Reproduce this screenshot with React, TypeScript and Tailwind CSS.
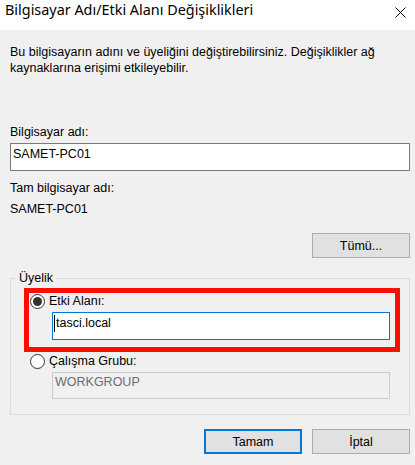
function Radio({ checked }: { checked?: boolean }) {
  return (
    <div className="w-[15px] h-[15px] rounded-full border border-[#333333] bg-white flex items-center justify-center shrink-0">
      {checked && <div className="w-[9px] h-[9px] rounded-full bg-[#333333]" />}
    </div>
  );
}

function Button({ label, focused }: { label: string; focused?: boolean }) {
  return (
    <div
      className={
        focused
          ? "w-[98px] h-[25px] bg-[#e1e1e1] border-2 border-[#0078d7] flex items-center justify-center text-[#000000]"
          : "w-[98px] h-[25px] bg-[#e1e1e1] border border-[#adadad] flex items-center justify-center text-[#000000]"
      }
    >
      {label}
    </div>
  );
}

export default function App() {
  return (
    <div className="w-[415px] h-[465px] bg-[#f0f0f0] overflow-hidden text-[12.5px] leading-[16px] text-black font-['Liberation_Sans',Arial,sans-serif]">
      {/* Title bar */}
      <div className="h-[30px] bg-white flex justify-between">
        <div className="pl-[5px] text-[14.4px] leading-[20px] text-[#000000] font-['Noto_Sans',sans-serif]">
          Bilgisayar Adı/Etki Alanı Değişiklikleri
        </div>
        <svg className="mt-[7px] mr-[9px]" width="11" height="11" viewBox="0 0 11 11">
          <path d="M0.5 0.5 L10.5 10.5 M10.5 0.5 L0.5 10.5" stroke="#000" strokeWidth="1" fill="none" />
        </svg>
      </div>

      {/* Body */}
      <div className="pl-[10px] pr-[5px] pt-[14px] flex flex-col">
        <p>
          Bu bilgisayarın adını ve üyeliğini değiştirebilirsiniz. Değişiklikler ağ kaynaklarına erişimi etkileyebilir.
        </p>

        <div className="mt-[48px]">Bilgisayar adı:</div>
        <div className="mt-[3px] h-[28px] bg-white border border-[#7a7a7a] pl-[2px] pt-[2px]">SAMET-PC01</div>

        <div className="mt-[9px]">Tam bilgisayar adı:</div>
        <div className="mt-[5px]">SAMET-PC01</div>

        <div className="mt-[16px] self-end">
          <Button label="Tümü..." />
        </div>

        {/* Membership group */}
        <fieldset className="mt-[12px] border border-[#dcdcdc] p-0 pb-[15px]">
          <legend className="ml-[5px] px-[3px] leading-[16px]">Üyelik</legend>

          <div className="mt-[2px] ml-[13px] w-[376px] border-[5px] border-[#ff0d00] pb-[7px]">
            <div className="flex items-center gap-[4px] pl-[1px] h-[16px]">
              <Radio checked />
              <span>Etki Alanı:</span>
            </div>
            <div className="mt-[3px] ml-[23px] w-[338px] h-[28px] bg-white border border-[#0078d7] pl-[1px] pt-[2px] flex items-start">
              <span className="w-[1px] h-[17px] bg-black mr-[1px]" />
              <span>tasci.local</span>
            </div>
          </div>

          <div className="mt-[1px] ml-[19px] flex items-center gap-[4px] h-[16px]">
            <Radio />
            <span>Çalışma Grubu:</span>
          </div>
          <div className="mt-[3px] ml-[41px] w-[338px] h-[27px] border border-[#cccccc] pl-[2px] pt-[1px] text-[#6d6d6d]">
            WORKGROUP
          </div>
        </fieldset>

        <div className="mt-[14px] flex justify-end gap-[10px]">
          <Button label="Tamam" focused />
          <Button label="İptal" />
        </div>
      </div>
    </div>
  );
}
